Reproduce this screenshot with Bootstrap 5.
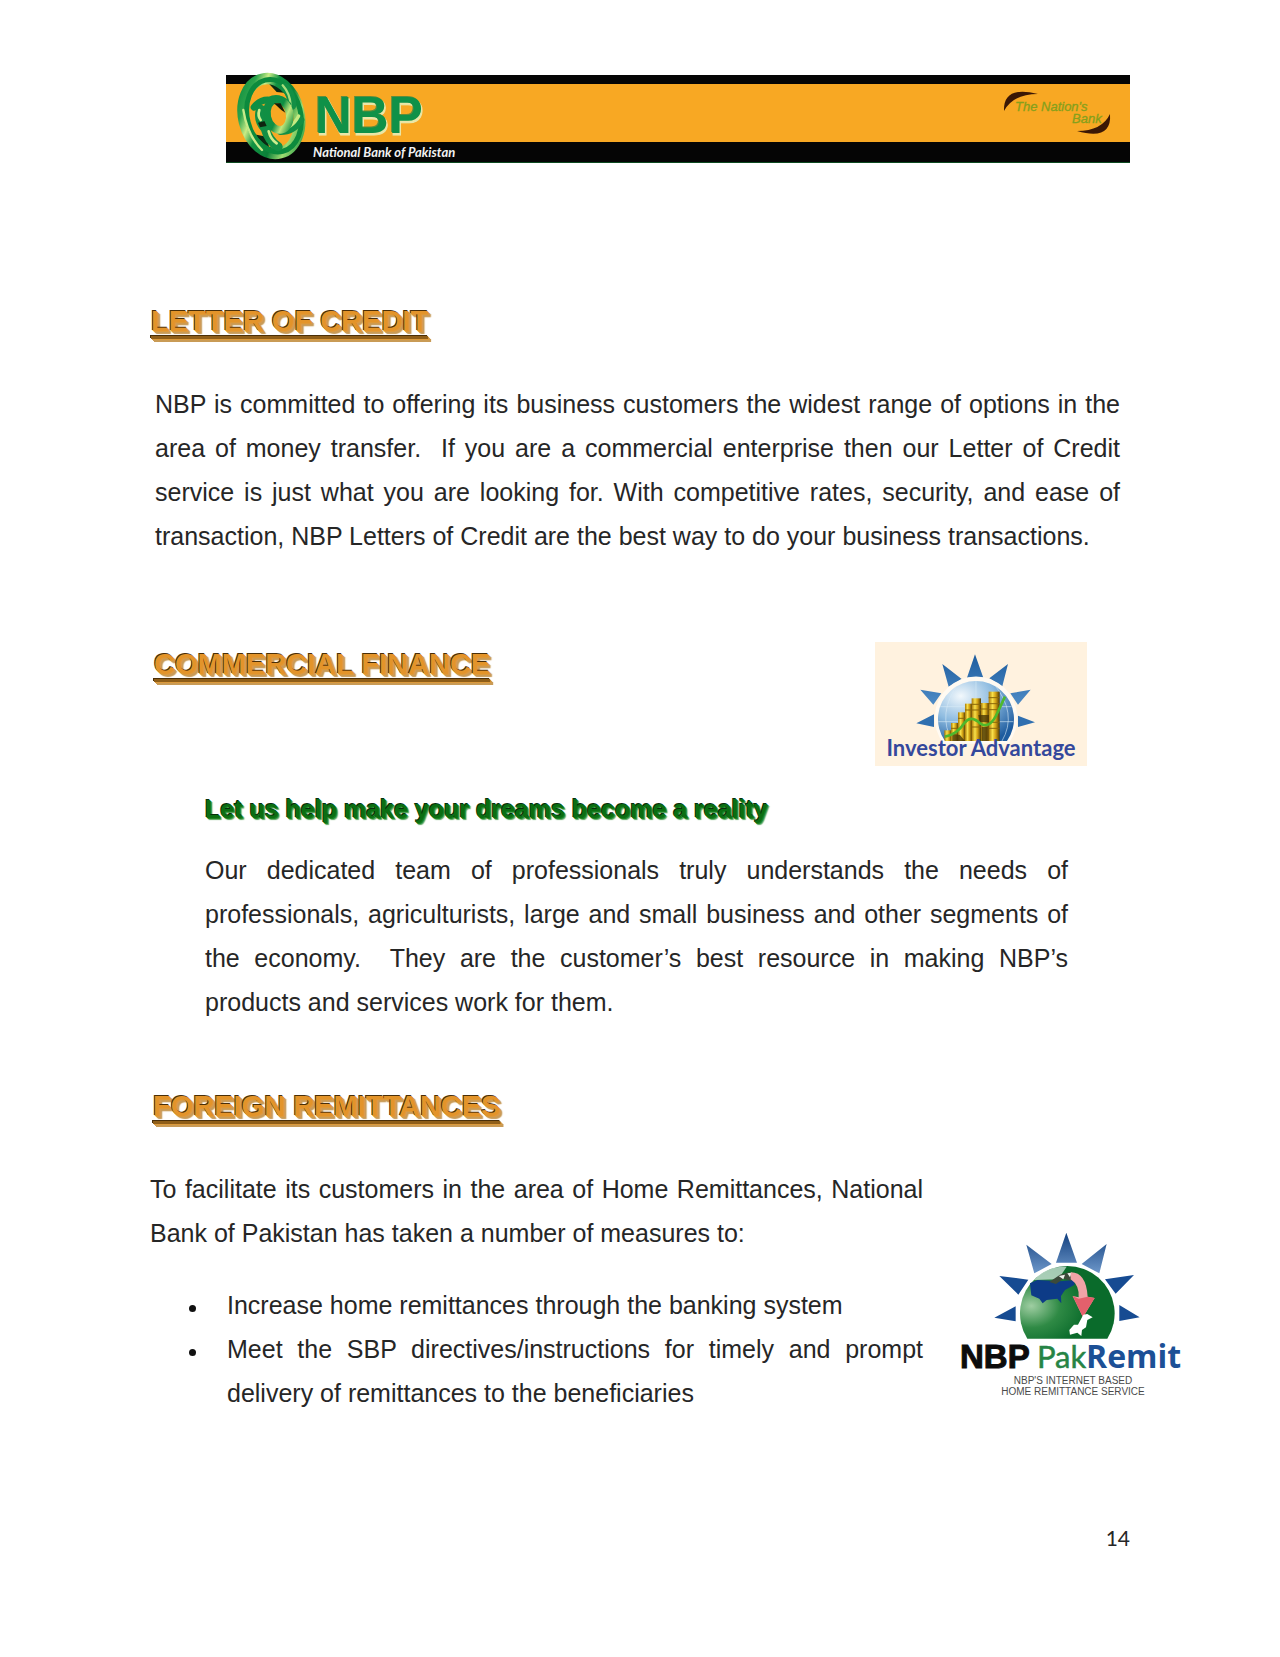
<!DOCTYPE html>
<html lang="en">
<head>
<meta charset="utf-8">
<meta name="viewport" content="width=device-width, initial-scale=1">
<title>NBP – Letter of Credit, Commercial Finance, Foreign Remittances</title>
<link href="https://cdn.jsdelivr.net/npm/bootstrap@5.3.0/dist/css/bootstrap.min.css" rel="stylesheet">
<style>
  body { font-family: "Liberation Sans", Arial, sans-serif; font-size: 25px; line-height: 44px; color: #262626; background: #fff; }
  .sheet { padding: 75px 98px 88px 150px; }
  .banner { height: 88px; margin: 0 52px 140px 76px; background: linear-gradient(#050505 0 9px, #f8a823 9px 67px, #050505 67px 87px, #0d4a20 87px); }
  .banner svg, .art { display: block; flex: none; }
  .title-gold { font-size: 29px; line-height: 36px; font-weight: 700; color: #e3942a; margin: 0; padding-left: 1px;
    text-decoration: underline #8f5e18 3px; text-underline-offset: 5px; text-decoration-skip-ink: none;
    text-shadow: -1px -1px 0 #4a2f08, 1px 1px 0 #dc9a3c, 2px 2px 0 #c99b56, 3px 3px 1px #c99b56; }
  .title-green { font-size: 25px; line-height: 32px; font-weight: 700; color: #0b6e12; margin: 27px 0 23px;
    text-shadow: -1px -1px 0 #06300a, 1px 1px 0 #1c8422, 2px 2px 1px #5ba75f; }
  .justified { text-align: justify; margin: 0; }
  .credit-text { margin: 43px 62px 84px 5px; }
  .finance, .remit-title { padding-left: 3px; }
  .finance-head { padding-right: 95px; }
  .finance-head h2 { padding-top: 4px; }
  .finance-body { padding: 0 114px 0 52px; margin-bottom: 64px; }
  .remit { gap: 37px; padding-top: 43px; }
  .remit .art { margin-top: 65px; }
  .measures { list-style: none; margin: 28px 0 0; padding-left: 77px; }
  .measures li::before { content: ""; display: inline-block; width: 7px; height: 7px; border-radius: 50%; background: #111; margin: 0 31px 2px -38px; }
  .page-no { font-family: Lato, sans-serif; font-size: 21px; line-height: 28px; margin: 109px 52px 0 0; }
</style>
</head>
<body>
<div class="sheet">
  <header class="banner d-flex justify-content-between">
    <svg width="240" height="88" viewBox="0 0 240 88" overflow="visible" role="img" aria-label="NBP National Bank of Pakistan">
      <defs>
        <linearGradient id="ring" x1="0" y1="0" x2="1" y2="1">
          <stop offset="0" stop-color="#0b8a3c"/><stop offset=".18" stop-color="#2ba34c"/><stop offset=".3" stop-color="#c9ec86"/><stop offset=".42" stop-color="#129344"/>
          <stop offset=".62" stop-color="#0b8038"/><stop offset=".78" stop-color="#9fdc72"/><stop offset="1" stop-color="#0a8a3a"/>
        </linearGradient>
        <linearGradient id="hub" x1="0" y1="0" x2="1" y2="1">
          <stop offset="0" stop-color="#118f44"/><stop offset=".5" stop-color="#0f8f43"/><stop offset=".72" stop-color="#c2e77c"/><stop offset="1" stop-color="#118f44"/>
        </linearGradient>
      </defs>
      <g transform="translate(4 -5) scale(.3333)" fill="none" stroke-linecap="round">
        <ellipse cx="127" cy="138" rx="88" ry="118" fill="#f8a823" transform="rotate(-14 127 138)"/>
        <path d="M112 36Q160 36 176 70L140 66Z" fill="#0b2a13"/>
        <path d="M66 192Q80 226 120 244L110 200Z" fill="#0b2a13"/>
        <ellipse cx="124" cy="138" rx="83" ry="114" stroke="url(#ring)" stroke-width="34" transform="rotate(-14 124 138)"/>
        <ellipse cx="132" cy="137" rx="80" ry="110" stroke="#0c8a3d" stroke-width="15" transform="rotate(-14 132 137)"/>
        <path d="M40 120Q52 196 96 240" stroke="#c7eb8a" stroke-width="7"/>
        <path d="M166 52Q186 76 186 106" stroke="#128f45" stroke-width="26"/>
        <path d="M158 46Q180 70 182 106" stroke="#a9dd7c" stroke-width="7"/>
        <path d="M72 112Q90 88 118 90Q148 76 174 104" stroke="#0f8f43" stroke-width="20"/>
        <path d="M92 118Q82 150 106 176Q116 212 144 230" stroke="#128f45" stroke-width="28"/>
        <path d="M88 120Q82 138 92 150M116 184Q122 208 140 220" stroke="#cdee8e" stroke-width="8"/>
        <path d="M84 158L108 152 110 168 90 172z" fill="#0e2410"/>
        <path d="M152 184Q190 184 212 150" stroke="#128f45" stroke-width="22"/>
        <path d="M180 168Q196 158 206 138" stroke="#c6ea82" stroke-width="10"/>
        <ellipse cx="145" cy="134" rx="34" ry="46" stroke="url(#hub)" stroke-width="23" transform="rotate(-12 145 134)"/>
        <path d="M132 100L152 100 166 128 154 120z" fill="#141c08"/>
      </g>
      <g font-family="Liberation Sans, Arial, sans-serif" font-weight="700" font-size="51">
        <text x="90" y="60" fill="#e9e7a8" stroke="#e9e7a8">NBP</text>
        <text x="88" y="57" fill="#5e8c3c">NBP</text>
        <text x="89" y="58" fill="#0f9148">NBP</text>
      </g>
      <text x="87" y="82" font-family="Lato, sans-serif" font-weight="700" font-style="italic" font-size="13" fill="#f2f2f2">National Bank of Pakistan</text>
    </svg>
    <svg width="169" height="88" viewBox="0 0 169 88" role="img" aria-label="The Nation's Bank">
      <path d="M43 36Q42 10 77 19Q52 19 43 36z" fill="#3a1705"/>
      <path d="M149 39Q151 66 116 56Q141 56 149 39z" fill="#3a1705"/>
      <g font-family="Liberation Sans, Arial, sans-serif" font-style="italic" font-size="13" fill="#85a01c" stroke="#85a01c" stroke-width=".3">
        <text x="54" y="36">The Nation's</text>
        <text x="111" y="48">Bank</text>
      </g>
    </svg>
  </header>

  <main>
    <section>
      <h2 class="title-gold">LETTER OF CREDIT</h2>
      <p class="justified credit-text">NBP is committed to offering its business customers the widest range of options in the area of money transfer.&nbsp; If you are a commercial enterprise then our Letter of Credit service is just what you are looking for. With competitive rates, security, and ease of transaction, NBP Letters of Credit are the best way to do your business transactions.</p>
    </section>

    <section class="finance">
      <div class="finance-head d-flex justify-content-between align-items-start">
        <h2 class="title-gold">COMMERCIAL FINANCE</h2>
        <svg class="art" width="212" height="124" viewBox="0 0 212 124" role="img" aria-label="Investor Advantage">
          <defs>
            <linearGradient id="rayA" x1="0" y1="0" x2="0" y2="1"><stop offset="0" stop-color="#1d5c9e"/><stop offset="1" stop-color="#4d8bc6"/></linearGradient>
            <radialGradient id="globeA" cx=".3" cy=".25" r=".85"><stop offset="0" stop-color="#f2f8fc"/><stop offset=".5" stop-color="#8dbbe0"/><stop offset="1" stop-color="#1e5c9f"/></radialGradient>
            <linearGradient id="coin"><stop offset="0" stop-color="#a87808"/><stop offset=".35" stop-color="#f8e04a"/><stop offset=".65" stop-color="#cf9d12"/><stop offset="1" stop-color="#4d3905"/></linearGradient>
            <clipPath id="globeClip"><path d="M240 318A114 114 0 1 1 426 318z"/></clipPath>
          </defs>
          <rect width="212" height="124" fill="#fff2df"/>
          <g transform="translate(-10 -7) scale(.3333)">
            <path fill="url(#rayA)" d="M330 58L355 128H306zM232 87L290 132 251 155zM429 87L412 154 373 130zM166 164L229 175 205 209zM497 164L459 209 436 175z"/>
            <path fill="#2f6fb0" d="M154 265L207 238V276zM510 262L459 276V242z"/>
            <path d="M236 326A124 124 0 1 1 430 326z" fill="#fffaf2"/>
            <path d="M240 318A114 114 0 1 1 426 318z" fill="url(#globeA)"/>
            <g clip-path="url(#globeClip)">
              <path d="M333 138V320M225 215H440M220 260H445M280 145Q215 235 262 320M385 145Q460 235 410 320" fill="none" stroke="#d9ebf7" stroke-width="3" opacity=".6"/>
              <g fill="url(#coin)">
                <rect x="238" y="286" width="22" height="40"/>
                <rect x="258" y="264" width="22" height="60"/>
                <rect x="279" y="232" width="22" height="90"/>
                <rect x="300" y="206" width="21" height="120"/>
                <rect x="320" y="190" width="28" height="130"/>
                <rect x="348" y="204" width="24" height="120"/>
                <rect x="371" y="170" width="33" height="150"/>
              </g>
              <path d="M279 250H301M300 225H321M320 208H348M320 225H348M348 222H372M371 188H404M371 206H404M371 224H404M371 262H404M371 280H404M320 276H348M258 280H280" stroke="#8a660a" stroke-width="3"/>
              <path d="M340 240H372V262H344zM350 275H368V318H350zM262 296L285 300 300 318H262z" fill="#4a3706" opacity=".8"/>
              <path d="M240 305Q275 300 300 262Q318 240 345 265Q375 285 398 232L420 185" fill="none" stroke="#4eb82c" stroke-width="8"/>
            </g>
          </g>
          <text x="106" y="114" text-anchor="middle" font-family="Lato, sans-serif" font-weight="700" font-size="22" fill="#34489c">Investor Advantage</text>
        </svg>
      </div>
      <div class="finance-body">
        <h3 class="title-green">Let us help make your dreams become a reality</h3>
        <p class="justified">Our dedicated team of professionals truly understands the needs of professionals, agriculturists, large and small business and other segments of the economy.&nbsp; They are the customer’s best resource in making NBP’s products and services work for them.</p>
      </div>
    </section>

    <section>
      <h2 class="title-gold remit-title">FOREIGN REMITTANCES</h2>
      <div class="remit d-flex align-items-start">
        <div class="flex-fill">
          <p class="justified">To facilitate its customers in the area of Home Remittances, National Bank of Pakistan has taken a number of measures to:</p>
          <ul class="measures justified">
            <li>Increase home remittances through the banking system</li>
            <li>Meet the SBP directives/instructions for timely and prompt delivery of remittances to the beneficiaries</li>
          </ul>
        </div>
        <svg class="art" width="222" height="168" viewBox="0 0 222 168" role="img" aria-label="NBP PakRemit">
          <defs>
            <linearGradient id="rayB" x1="0" y1="0" x2="0" y2="1"><stop offset="0" stop-color="#12407f"/><stop offset="1" stop-color="#6d97c9"/></linearGradient>
            <radialGradient id="globeB" cx=".12" cy=".55" r=".6"><stop offset="0" stop-color="#9fcea2"/><stop offset=".5" stop-color="#2f8a45"/><stop offset="1" stop-color="#0a6b2b"/></radialGradient>
          </defs>
          <g transform="translate(-10 -12) scale(.3333)">
            <path fill="url(#rayB)" d="M349 38L381 128H318zM229 74L305 132 253 160zM470 72L448 160 395 132z"/>
            <path fill="#164b92" d="M148 168L235 179 205 224zM552 165L497 221 465 178zM133 293L197 259V304zM569 292L508 303V255z"/>
            <path d="M232 356A142 142 0 1 1 472 356z" fill="url(#globeB)"/>
            <path d="M252 180Q290 138 350 140L325 178z" fill="#d7e9e0" opacity=".75"/>
            <path d="M240 190L262 180 330 184 372 180 374 194 345 210 333 228 334 250 322 236 290 240 278 250 268 236 244 226z" fill="#0d3b87"/>
            <path d="M298 186L330 164 360 156 364 182 340 176 318 192z" fill="#3c4a3a"/>
            <path d="M326 168L345 164 340 178zM352 160L366 158 360 172z" fill="#eef3ee"/>
            <path d="M362 157Q408 156 413 230L434 234 399 292 368 228 386 232Q388 195 362 178z" fill="#f0a3a6"/>
            <path d="M368 228L386 236 413 230 434 234 399 292z" fill="#e4606c"/>
            <path d="M400 284L412 282 428 292 412 300 408 322 396 330 394 348 382 338 360 344 358 330 372 314 384 314z" fill="#fff"/>
          </g>
          <text x="0" y="136" font-family="Liberation Sans, Arial, sans-serif" font-weight="700" font-size="33" fill="#0c0c0c" stroke="#0c0c0c">NBP</text>
          <text x="77" y="136" font-family="Lato, sans-serif" font-size="31" fill="#268445" stroke="#268445" stroke-width=".5">Pak</text>
          <text x="126" y="136" font-family="Open Sans, sans-serif" font-weight="700" font-size="32" fill="#1c5096">Remit</text>
          <g font-family="Liberation Sans, Arial, sans-serif" font-size="10" fill="#4a4a4a" text-anchor="middle">
            <text x="113" y="152">NBP'S INTERNET BASED</text>
            <text x="113" y="163">HOME REMITTANCE SERVICE</text>
          </g>
        </svg>
      </div>
    </section>
  </main>

  <footer class="page-no text-end">14</footer>
</div>
<script src="https://cdn.jsdelivr.net/npm/bootstrap@5.3.0/dist/js/bootstrap.bundle.min.js"></script>
</body>
</html>
